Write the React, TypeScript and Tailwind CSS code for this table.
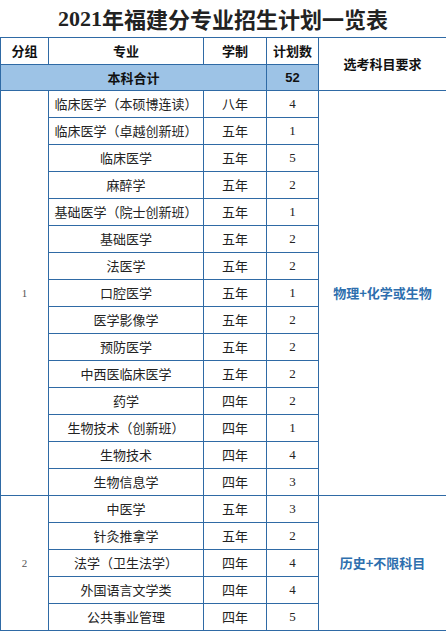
import React from 'react';

const groupOne = [
  ['临床医学（本硕博连读）', '八年', '4'],
  ['临床医学（卓越创新班）', '五年', '1'],
  ['临床医学', '五年', '5'],
  ['麻醉学', '五年', '2'],
  ['基础医学（院士创新班）', '五年', '1'],
  ['基础医学', '五年', '2'],
  ['法医学', '五年', '2'],
  ['口腔医学', '五年', '1'],
  ['医学影像学', '五年', '2'],
  ['预防医学', '五年', '2'],
  ['中西医临床医学', '五年', '2'],
  ['药学', '四年', '2'],
  ['生物技术（创新班）', '四年', '1'],
  ['生物技术', '四年', '4'],
  ['生物信息学', '四年', '3'],
];

const groupTwo = [
  ['中医学', '五年', '3'],
  ['针灸推拿学', '五年', '2'],
  ['法学（卫生法学）', '四年', '4'],
  ['外国语言文学类', '四年', '4'],
  ['公共事业管理', '四年', '5'],
];

const cjk = "font-['Noto_Sans_CJK_SC',sans-serif]";
const cell = 'border border-[#2f6aa5] text-center p-0';

const Group = ({ no, rows, subject }: { no: string; rows: string[][]; subject: string }) => (
  <>
    {rows.map((r, i) => (
      <tr key={r[0]} className="h-[27px]">
        {i === 0 && (
          <td rowSpan={rows.length} className={`${cell} text-[11px] text-[#555] font-['Liberation_Serif',serif]`}>
            {no}
          </td>
        )}
        <td className={`${cell} text-[13px] text-[#222] ${cjk}`}>{r[0]}</td>
        <td className={`${cell} text-[13px] text-[#222] ${cjk}`}>{r[1]}</td>
        <td className={`${cell} text-[13px] text-[#222] font-['Liberation_Serif',serif]`}>{r[2]}</td>
        {i === 0 && (
          <td rowSpan={rows.length} className={`${cell} text-[13px] font-bold text-[#2e6fae] ${cjk}`}>
            {subject}
          </td>
        )}
      </tr>
    ))}
  </>
);

export default function App() {
  return (
    <div className="w-[446px] h-[631px] bg-white overflow-hidden">
      <h1 className={`h-[37px] flex items-center justify-center text-[22px] font-bold text-[#222] ${cjk}`}>
        <span className="font-['Liberation_Serif',serif]">2021</span>年福建分专业招生计划一览表
      </h1>
      <table className="w-[446px] table-fixed border-collapse">
        <colgroup>
          <col className="w-[48px]" />
          <col className="w-[155px]" />
          <col className="w-[63px]" />
          <col className="w-[52px]" />
          <col className="w-[128px]" />
        </colgroup>
        <tbody>
          <tr className="h-[27px]">
            <td className={`${cell} text-[13px] font-bold text-[#111] ${cjk}`}>分组</td>
            <td className={`${cell} text-[13px] font-bold text-[#111] ${cjk}`}>专业</td>
            <td className={`${cell} text-[13px] font-bold text-[#111] ${cjk}`}>学制</td>
            <td className={`${cell} text-[13px] font-bold text-[#111] ${cjk}`}>计划数</td>
            <td rowSpan={2} className={`${cell} text-[13px] font-bold text-[#111] ${cjk}`}>选考科目要求</td>
          </tr>
          <tr className="h-[26px] bg-[#9dc3e6]">
            <td colSpan={3} className={`${cell} text-[13px] font-bold text-[#111] ${cjk}`}>本科合计</td>
            <td className={`${cell} text-[13px] font-bold text-[#111] font-['Liberation_Sans',sans-serif]`}>52</td>
          </tr>
          <Group no="1" rows={groupOne} subject="物理+化学或生物" />
          <Group no="2" rows={groupTwo} subject="历史+不限科目" />
        </tbody>
      </table>
    </div>
  );
}
